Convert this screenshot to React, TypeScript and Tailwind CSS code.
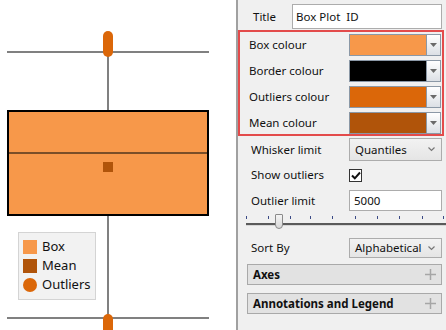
import type { ReactNode } from 'react';

const BOX = '#f7984a';
const OUTLIER = '#db6709';
const MEAN = '#b0540a';

export default function App() {
  return (
    <div className="w-[446px] h-[330px] flex overflow-hidden font-['Noto_Sans',sans-serif] text-[#111]">
      <BoxPlot />
      <Panel />
    </div>
  );
}

function BoxPlot() {
  return (
    <div className="relative w-[236px] h-full bg-white shrink-0">
      <svg width="236" height="330" className="block">
        <line x1="7" y1="52" x2="209" y2="52" stroke="#808080" strokeWidth="2" />
        <line x1="108" y1="52" x2="108" y2="110" stroke="#808080" strokeWidth="2" />
        <line x1="108" y1="216" x2="108" y2="318" stroke="#808080" strokeWidth="2" />
        <line x1="7" y1="318" x2="209" y2="318" stroke="#808080" strokeWidth="2" />
        <rect x="8" y="111" width="200" height="104" fill={BOX} stroke="#000" strokeWidth="2" />
        <line x1="9" y1="153" x2="207" y2="153" stroke="#7a4e28" strokeWidth="2" />
        <rect x="103" y="162" width="10" height="10" fill={MEAN} />
        <rect x="103" y="31" width="10" height="26" rx="5" fill={OUTLIER} />
        <rect x="103" y="314" width="10" height="26" rx="5" fill={OUTLIER} />
      </svg>

      {/* Legend sits over the plot */}
      <div className="absolute left-[18px] top-[232px] w-[78px] h-[68px] bg-[#f2f2f2] border border-[#d4d4d4] pl-[4px] pt-[4px] flex flex-col text-[13px] leading-none">
        <LegendItem label="Box">
          <div className="w-[14px] h-[14px]" style={{ background: BOX }} />
        </LegendItem>
        <LegendItem label="Mean">
          <div className="w-[14px] h-[14px]" style={{ background: MEAN }} />
        </LegendItem>
        <LegendItem label="Outliers">
          <div className="w-[14px] h-[14px] rounded-full" style={{ background: OUTLIER }} />
        </LegendItem>
      </div>
    </div>
  );
}

function LegendItem({ label, children }: { label: string; children: ReactNode }) {
  return (
    <div className="h-[19px] flex items-center gap-[5px]">
      {children}
      <span>{label}</span>
    </div>
  );
}

function Panel() {
  return (
    <div className="flex-1 h-full bg-[#f0f0f0] border-l-2 border-[#a0a0a0] flex flex-col text-[11.5px] leading-none">
      {/* Title */}
      <div className="mt-[4px] h-[25px] flex items-center">
        <span className="pl-[15px] w-[54px]">Title</span>
        <div className="w-[150px] h-[25px] bg-white border border-[#acacac] px-[3px] flex items-center whitespace-pre">
          Box Plot  ID
        </div>
      </div>

      {/* Highlighted colour settings */}
      <div className="mt-[1px] w-[206px] h-[106px] border-2 border-[#e34b4b] pt-[2px] flex flex-col gap-[4px]">
        <ColourRow label="Box colour" colour={BOX} />
        <ColourRow label="Border colour" colour="#000000" />
        <ColourRow label="Outliers colour" colour={OUTLIER} />
        <ColourRow label="Mean colour" colour={MEAN} />
      </div>

      <div className="mt-[2px] h-[23px] flex items-center">
        <span className="pl-[13px] w-[111px]">Whisker limit</span>
        <Dropdown value="Quantiles" h="h-[23px]" />
      </div>

      <div className="mt-[5px] h-[18px] flex items-center">
        <span className="pl-[13px] w-[111px]">Show outliers</span>
        <div className="w-[13px] h-[13px] bg-white border border-[#333] flex items-center justify-center">
          <svg width="10" height="9" viewBox="0 0 10 9">
            <path d="M1 4.5 L3.8 7.3 L9 1.5" fill="none" stroke="#111" strokeWidth="2" />
          </svg>
        </div>
      </div>

      <div className="mt-[6px] h-[21px] flex items-center">
        <span className="pl-[13px] w-[111px]">Outlier limit</span>
        <div className="w-[93px] h-[21px] bg-white border border-[#acacac] px-[4px] flex items-center">5000</div>
      </div>

      <Slider />

      <div className="mt-[7px] h-[20px] flex items-center">
        <span className="pl-[13px] w-[111px]">Sort By</span>
        <Dropdown value="Alphabetical" h="h-[20px]" />
      </div>

      <Section title="Axes" className="mt-[6px]" />
      <Section title="Annotations and Legend" className="mt-[8px]" />
    </div>
  );
}

function ColourRow({ label, colour }: { label: string; colour: string }) {
  return (
    <div className="h-[22px] flex items-center">
      <span className="pl-[9px] w-[109px]">{label}</span>
      <div className="w-[92px] h-[22px] border border-[#8b98a6] flex">
        <div className="flex-1" style={{ background: colour }} />
        <div className="w-[14px] border-l border-[#8b98a6] bg-gradient-to-b from-white to-[#dce0e5] flex items-center justify-center">
          <svg width="7" height="4" viewBox="0 0 7 4">
            <path d="M0 0 H7 L3.5 4 Z" fill="#6a6a6a" />
          </svg>
        </div>
      </div>
    </div>
  );
}

function Dropdown({ value, h }: { value: string; h: string }) {
  return (
    <div className={`w-[93px] ${h} border border-[#acacac] bg-gradient-to-b from-[#f2f2f2] to-[#e5e5e5] pl-[5px] pr-[6px] flex items-center justify-between text-[11.5px]`}>
      <span>{value}</span>
      <svg width="7" height="5" viewBox="0 0 7 5">
        <path d="M0.5 0.5 L3.5 3.5 L6.5 0.5" fill="none" stroke="#777" strokeWidth="1.2" />
      </svg>
    </div>
  );
}

function Slider() {
  const ticks = [8, 30, 52, 72, 94, 117, 139, 161, 184, 205];
  return (
    <div className="relative mt-[2px] h-[18px]">
      {ticks.map((x) => (
        <div key={x} className="absolute top-[3px] w-px h-[3px] bg-[#3b4a86]" style={{ left: x }} />
      ))}
      <div className="absolute left-[8px] right-0 top-[10px] h-[3px] bg-[#5a5a5a] border-b border-[#d6d6d6]" />
      <div className="absolute left-[37px] top-[1px] w-[8px] h-[15px] bg-gradient-to-b from-[#f4f4f4] to-[#d8d8d8] border border-[#8a8a8a] rounded-b-[4px] rounded-t-[1px]" />
    </div>
  );
}

function Section({ title, className }: { title: string; className: string }) {
  return (
    <div className={`${className} ml-[9px] w-[195px] h-[21px] bg-[#e2e2e2] border border-[#a9a9a9] pl-[5px] pr-[5px] flex items-center justify-between`}>
      <span className="font-bold text-[11.5px]">{title}</span>
      <svg width="11" height="11" viewBox="0 0 11 11">
        <path d="M5.5 0 V11 M0 5.5 H11" stroke="#a6a6a6" strokeWidth="1.5" />
      </svg>
    </div>
  );
}
